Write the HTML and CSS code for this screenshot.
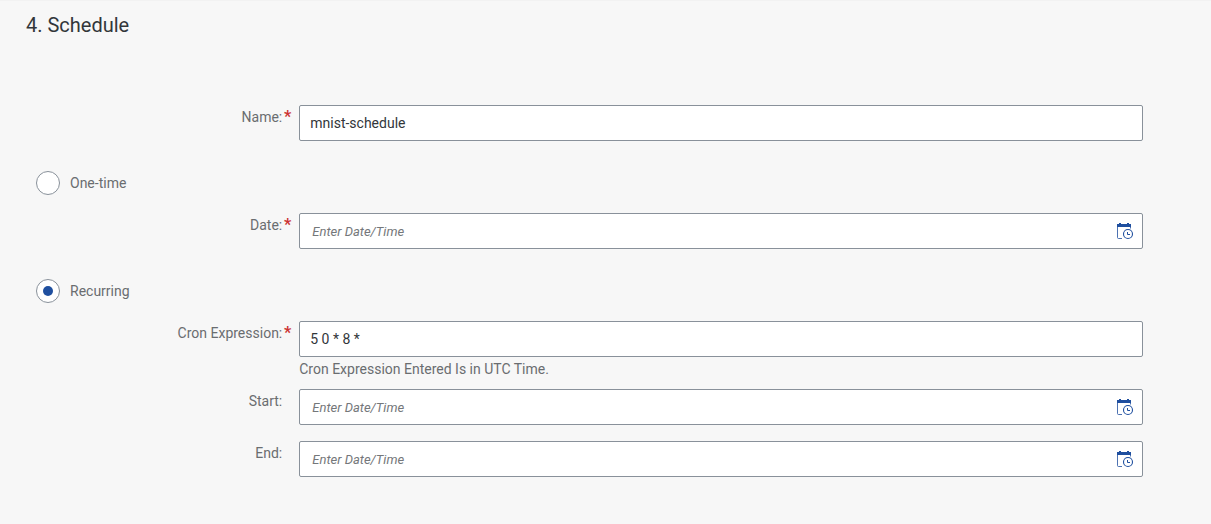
FILE: index.html
```html
<!DOCTYPE html>
<html lang="en">
<head>
<meta charset="utf-8">
<meta name="viewport" content="width=device-width, initial-scale=1">
<title>Schedule</title>
<link rel="stylesheet" href="styles.css">
</head>
<body>
<svg class="sprite" aria-hidden="true">
  <symbol id="date-time" viewBox="0 0 18 18">
    <path d="M1.500 4v11.500q0 1 1 1H6M14.500 4v2.500" fill="none" stroke="currentColor" stroke-width="1" opacity=".8"/>
    <path d="M1 2h2V1h2v1h6V1h2v1h2v3H1z" fill="currentColor"/>
    <circle cx="12" cy="12" r="4.500" fill="none" stroke="currentColor" stroke-width="1.100"/>
    <path d="M11.500 10v2.500h2.500" fill="none" stroke="currentColor" stroke-width="1"/>
  </symbol>
</svg>
<main class="step">
  <h1 class="step-title">4. Schedule</h1>
  <form class="form">
    <div class="row">
      <label class="label required" for="name">Name:</label>
      <div class="field"><input class="input" id="name" type="text" value="mnist-schedule" required></div>
    </div>
    <label class="choice"><input class="radio" type="radio" name="mode"><span>One-time</span></label>
    <div class="row">
      <label class="label required" for="date">Date:</label>
      <div class="field"><input class="input" id="date" type="text" placeholder="Enter Date/Time"><button class="picker" type="button" aria-label="Open date picker"><svg class="icon"><use href="#date-time"/></svg></button></div>
    </div>
    <label class="choice"><input class="radio" type="radio" name="mode" checked><span>Recurring</span></label>
    <div class="row">
      <label class="label required" for="cron">Cron Expression:</label>
      <div>
        <div class="field"><input class="input" id="cron" type="text" value="5 0 * 8 *" aria-describedby="cron-hint"></div>
        <p class="hint" id="cron-hint">Cron Expression Entered Is in UTC Time.</p>
      </div>
    </div>
    <div class="row after-hint">
      <label class="label" for="start">Start:</label>
      <div class="field"><input class="input" id="start" type="text" placeholder="Enter Date/Time"><button class="picker" type="button" aria-label="Open start date picker"><svg class="icon"><use href="#date-time"/></svg></button></div>
    </div>
    <div class="row last">
      <label class="label" for="end">End:</label>
      <div class="field"><input class="input" id="end" type="text" placeholder="Enter Date/Time"><button class="picker" type="button" aria-label="Open end date picker"><svg class="icon"><use href="#date-time"/></svg></button></div>
    </div>
  </form>
</main>
</body>
</html>
```
FILE: styles.css
```css
* {
  box-sizing: border-box;
}

body {
  margin: 0;
  background: #f7f7f7;
  color: #6a6d70;
  font: 14px/24px Roboto, "Liberation Sans", sans-serif;
}

.sprite {
  position: absolute;
  width: 0;
  height: 0;
}

.step {
  padding: 8px 68px 32px 18px;
  border-top: 1px solid #f2f2f2;
}

.step-title {
  margin: 0 0 64px;
  padding-left: 8px;
  color: #32363a;
  font-size: 20px;
  font-weight: 400;
  line-height: 32px;
}

.row {
  display: grid;
  grid-template-columns: 1fr 3fr;
}

.label {
  display: flex;
  justify-content: flex-end;
  padding-right: 8px;
}

.label::after {
  content: "";
  width: 9px;
  color: #cc3333;
  font-size: 16px;
  font-weight: 700;
  text-align: right;
}

.required::after {
  content: "*";
}

.field {
  display: flex;
  height: 36px;
  border: 1px solid #89919a;
  border-radius: 2px;
  background: #fff;
}

.input {
  flex: 1;
  min-width: 0;
  padding: 0 10px;
  border: 0;
  outline: 0;
  background: transparent;
  color: #32363a;
  font: inherit;
}

.input::placeholder {
  padding-left: 2px;
  color: #74777a;
  font-size: 13px;
  font-style: italic;
  opacity: 1;
}

.picker {
  display: grid;
  place-items: center;
  width: 34px;
  padding: 0;
  border: 0;
  background: transparent;
  color: #1f4f9f;
}

.icon {
  width: 18px;
  height: 18px;
}

.choice {
  display: flex;
  align-items: center;
  gap: 10px;
  width: max-content;
  height: 36px;
  margin: 24px 0 12px 18px;
}

.radio {
  display: grid;
  place-items: center;
  width: 24px;
  height: 24px;
  margin: 0;
  appearance: none;
  border: 1px solid #89919a;
  border-radius: 50%;
  background: #fff;
}

.radio:checked::before {
  content: "";
  width: 10px;
  height: 10px;
  border-radius: 50%;
  background: #1f4f9f;
}

.hint {
  margin: 0;
}

.after-hint {
  margin-top: 8px;
}

.last {
  margin-top: 16px;
}
```
